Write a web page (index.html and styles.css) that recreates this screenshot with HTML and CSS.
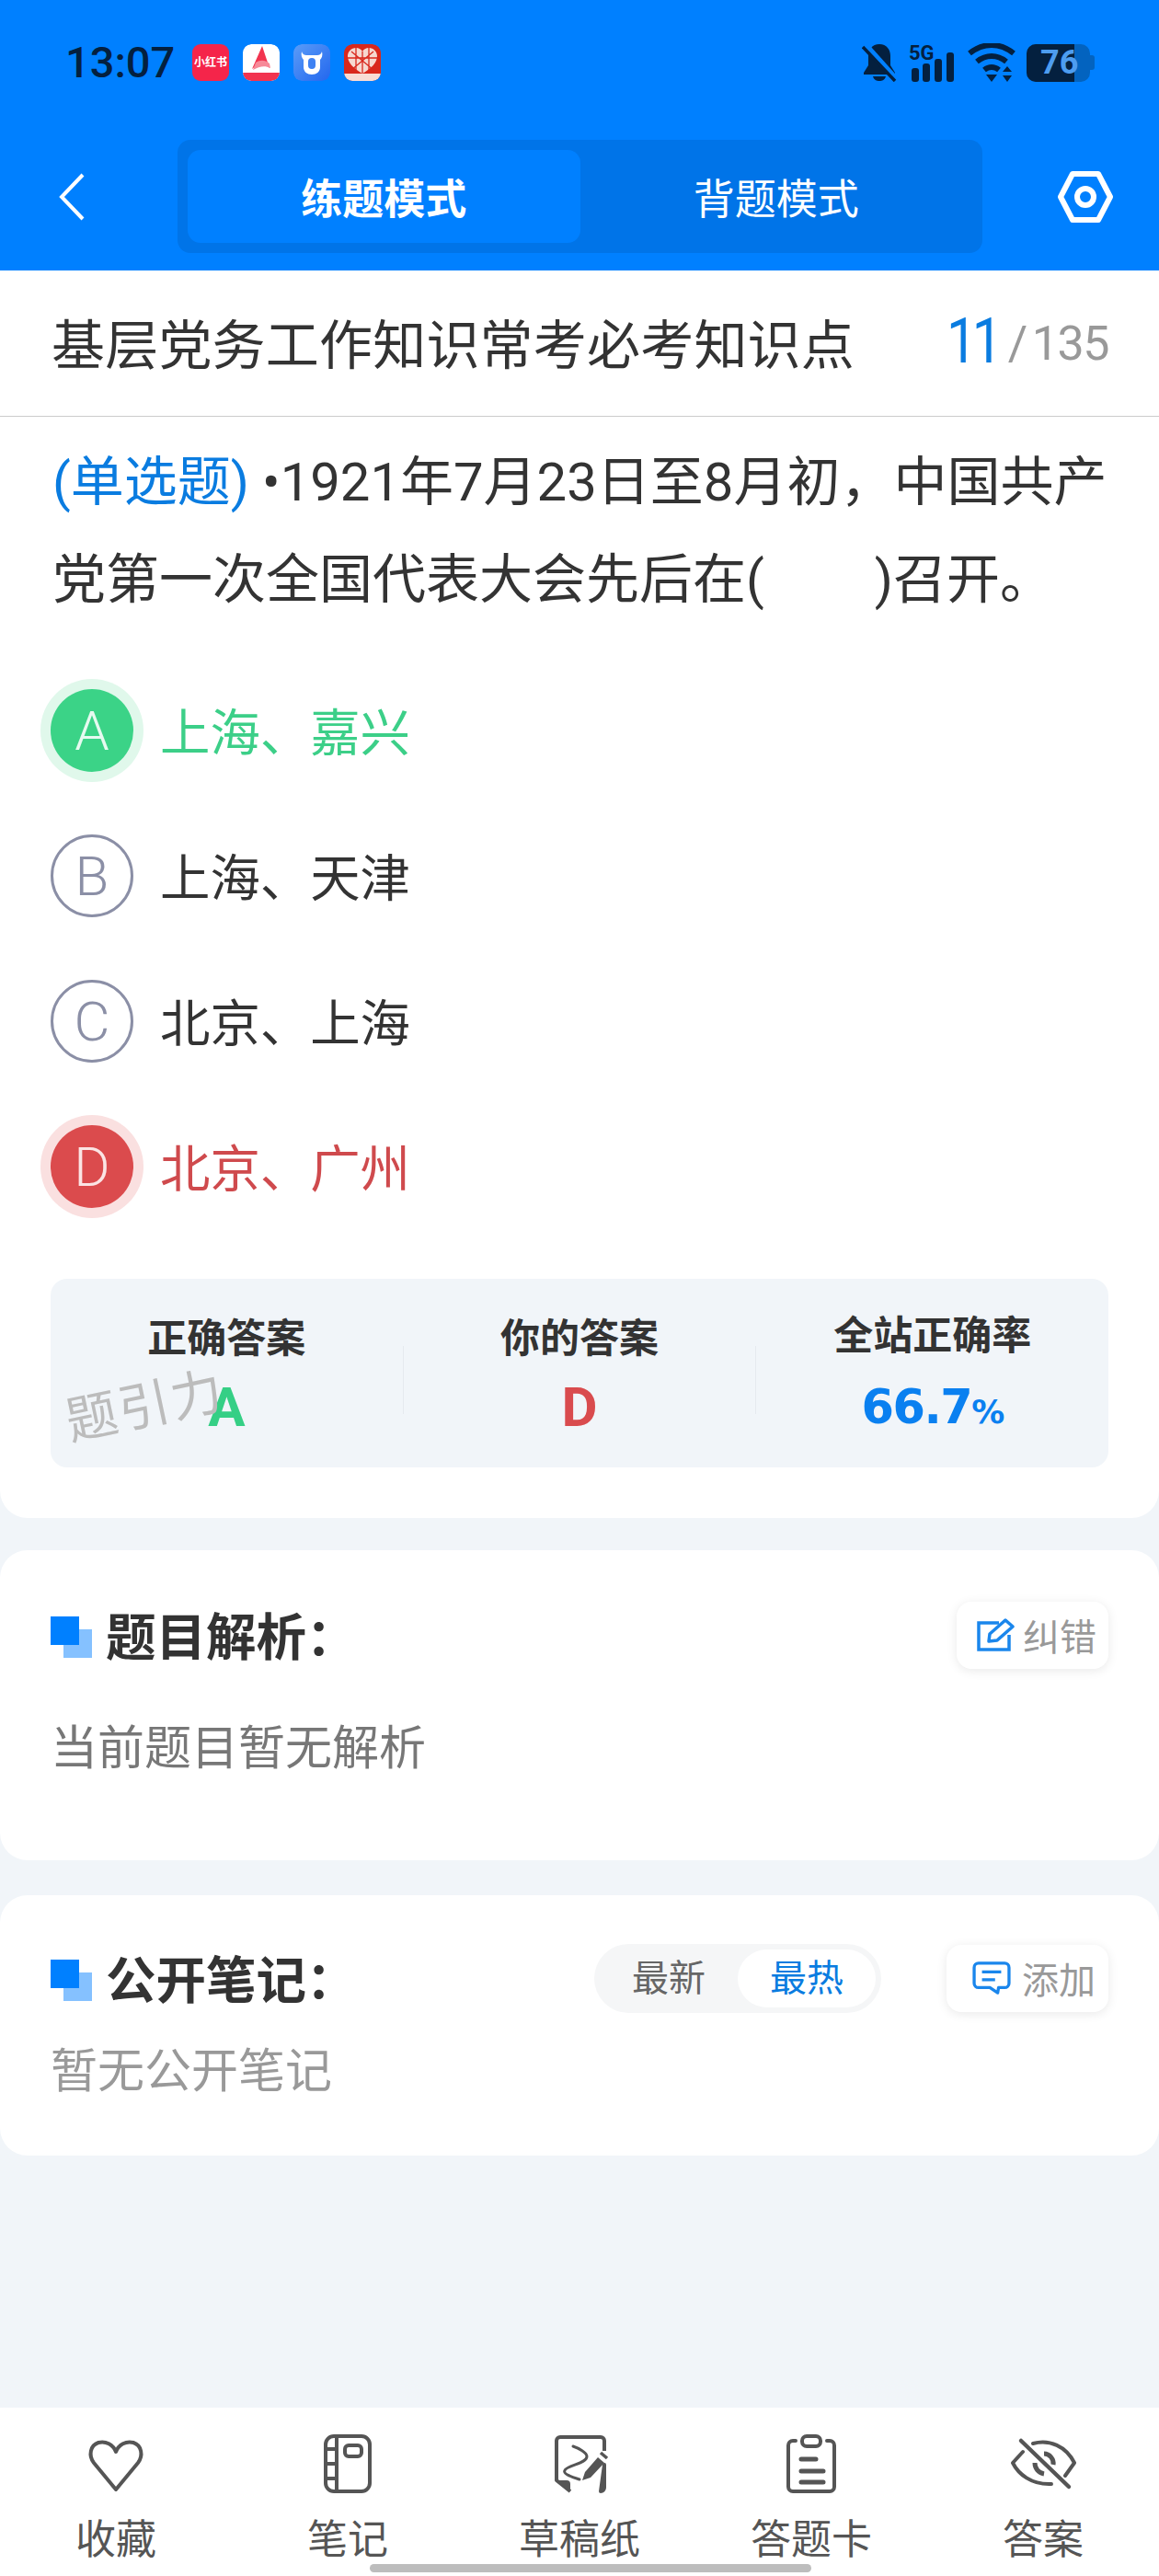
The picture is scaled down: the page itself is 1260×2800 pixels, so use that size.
FILE: index.html
```html
<!DOCTYPE html>
<html lang="zh-CN">
<head>
  <meta charset="UTF-8" />
  <meta name="viewport" content="width=device-width, initial-scale=1.0"/>
  <title>题目详情</title>
  <link rel="stylesheet" href="styles.css">
</head>
<body>

<div class="page">
  <header class="top">
    <div class="status">
      <span class="time">13:07</span>
      <div class="apps">
        <div class="app app-xhs">小红书</div>
        <svg class="app" viewBox="0 0 40 40">
          <rect width="40" height="40" rx="9" fill="#fff"/>
          <path d="M0 31h40a9 9 0 0 1-9 9H9a9 9 0 0 1-9-9z" fill="#f2344f"/>
          <path d="M21 2l8 24-6-5c-4-1-8 2-13 6z" fill="#f2344f"/>
          <path d="M14 20c5-3 10-3 15 1l1 5c-6-3-12-2-19 2z" fill="#f78a98"/>
        </svg>
        <svg class="app" viewBox="0 0 40 40">
          <defs>
            <linearGradient id="cow" x1="0" y1="0" x2="1" y2="1">
              <stop offset="0" stop-color="#5a9cf8"/>
              <stop offset="1" stop-color="#2367ee"/>
            </linearGradient>
          </defs>
          <rect width="40" height="40" rx="9" fill="url(#cow)"/>
          <path d="M9 8c1 3 3 4 5 4h12c2 0 4-1 5-4 1 4 0 7-2 9v8c0 5-4 8-9 8s-9-3-9-8v-8c-2-2-3-5-2-9z" fill="#fff"/>
          <rect x="16" y="15" width="8" height="12" rx="4" fill="#3f82f3"/>
        </svg>
        <svg class="app" viewBox="0 0 40 40">
          <rect width="40" height="40" rx="9" fill="#d9281c"/>
          <path d="M20 32C10 26 4 20 4 13c0-5 4-9 9-9 3 0 5 1 7 4 2-3 4-4 7-4 5 0 9 4 9 9 0 7-6 13-16 19z" fill="#f6d9d0"/>
          <path d="M20 8v24M8 8l24 20M32 8L8 28M4 15h32M13 4v24M27 4v24" stroke="#d9281c" stroke-width="1.3" fill="none"/>
          <path d="M0 32h40a9 9 0 0 1-9 8H9a9 9 0 0 1-9-8z" fill="#f8dcd4"/>
        </svg>
      </div>
      <div class="sys">
        <svg class="ic-bell" viewBox="0 0 38 42">
          <path d="M19 1c8 0 12 6 12 13v10l5 8v2H2v-2l5-8V14C7 7 11 1 19 1z" fill="#04203f"/>
          <path d="M12 36h14c-1 4-4 5-7 5s-6-1-7-5z" fill="#04203f"/>
          <path d="M4 1l34 38" stroke="#0080ff" stroke-width="5"/>
          <path d="M1 4l35 37" stroke="#04203f" stroke-width="3.5"/>
        </svg>
        <svg class="ic-signal" viewBox="0 0 50 42">
          <text x="0" y="18" class="sig-label">5G</text>
          <rect x="3" y="27" width="8" height="15" rx="3" fill="#04203f"/>
          <rect x="15" y="22" width="8" height="20" rx="3" fill="#04203f"/>
          <rect x="28" y="17" width="8" height="25" rx="3" fill="#04203f"/>
          <rect x="41" y="10" width="8" height="32" rx="3" fill="#04203f"/>
        </svg>
        <svg class="ic-wifi" viewBox="0 0 54 42">
          <path d="M3 11c15-12 33-12 48 0M11 20c10-8 22-8 32 0M19 29c5-4 11-4 16 0" fill="none" stroke="#04203f" stroke-width="6"/>
          <path d="M21 34h12l-6 8zM39 31l5-6 5 6zM39 35h10l-5 7z" fill="#04203f"/>
        </svg>
        <div class="battery">
          <div class="battery-body">
            <div class="battery-fill"></div>
            <span class="battery-num">76</span>
          </div>
          <div class="battery-tip"></div>
        </div>
      </div>
    </div>
    <div class="nav">
      <svg class="ic-back" viewBox="0 0 28 52">
        <path d="M26 2L3 26l23 24" fill="none" stroke="#fff" stroke-width="4"/>
      </svg>
      <div class="mode">
        <div class="mode-item active">练题模式</div>
        <div class="mode-item">背题模式</div>
      </div>
      <svg class="ic-set" viewBox="0 0 60 56">
        <path d="M16 3h28l13 25-13 25H16L3 28z" fill="none" stroke="#fff" stroke-width="6" stroke-linejoin="round"/>
        <circle cx="30" cy="28" r="9" fill="none" stroke="#fff" stroke-width="6"/>
      </svg>
    </div>
  </header>

  <main class="main">
    <section class="card card-q">
      <div class="paper">
        <div class="paper-name">基层党务工作知识常考必考知识点</div>
        <div class="paper-count"><span class="count-now">11</span><span class="count-sep">/</span>135</div>
      </div>
      <div class="question"><span class="q-type">(单选题)</span><span class="q-dot">•</span>1921年7月23日至8月初，中国共产党第一次全国代表大会先后在(<span class="q-blank"></span>)召开。</div>
      <div class="options">
        <div class="option right"><span class="letter">A</span><span class="opt-text">上海、嘉兴</span></div>
        <div class="option"><span class="letter">B</span><span class="opt-text">上海、天津</span></div>
        <div class="option"><span class="letter">C</span><span class="opt-text">北京、上海</span></div>
        <div class="option wrong"><span class="letter">D</span><span class="opt-text">北京、广州</span></div>
      </div>
      <div class="stats">
        <div class="stat">
          <div class="stat-label">正确答案</div>
          <div class="stat-value green">A</div>
        </div>
        <div class="stat-line"></div>
        <div class="stat">
          <div class="stat-label">你的答案</div>
          <div class="stat-value red">D</div>
        </div>
        <div class="stat-line"></div>
        <div class="stat">
          <div class="stat-label">全站正确率</div>
          <div class="stat-value blue rate">66.7<small>%</small></div>
        </div>
        <div class="watermark">题引力</div>
      </div>
    </section>

    <section class="card card-parse">
      <div class="sec-head">
        <svg class="sec-icon" viewBox="0 0 45 45">
          <rect x="14" y="14" width="31" height="31" fill="#85c1ff"/>
          <rect x="0" y="0" width="31" height="31" fill="#0080ff"/>
        </svg>
        <h2 class="sec-title">题目解析：</h2>
        <div class="sec-btn">
          <svg class="btn-ic" viewBox="0 0 42 36">
            <path d="M24 5H2v29h33V18" fill="none" stroke="#1a86ec" stroke-width="3.5"/>
            <path d="M13 25l1-8L31 2l8 7-17 15z" fill="none" stroke="#1a86ec" stroke-width="3.5" stroke-linejoin="round"/>
          </svg>
          纠错
        </div>
      </div>
      <p class="sec-text">当前题目暂无解析</p>
    </section>

    <section class="card card-note">
      <div class="sec-head">
        <svg class="sec-icon" viewBox="0 0 45 45">
          <rect x="14" y="14" width="31" height="31" fill="#85c1ff"/>
          <rect x="0" y="0" width="31" height="31" fill="#0080ff"/>
        </svg>
        <h2 class="sec-title">公开笔记：</h2>
        <div class="sort">
          <span class="sort-item">最新</span>
          <span class="sort-item on">最热</span>
        </div>
        <div class="sec-btn add">
          <svg class="btn-ic" viewBox="0 0 44 38">
            <path d="M7 2h30a5 5 0 0 1 5 5v18a5 5 0 0 1-5 5h-7l-1 6-9-6H7a5 5 0 0 1-5-5V7a5 5 0 0 1 5-5z" fill="none" stroke="#1a86ec" stroke-width="3.5" stroke-linejoin="round"/>
            <path d="M11 12h22M11 21h15" stroke="#1a86ec" stroke-width="3.5"/>
          </svg>
          添加
        </div>
      </div>
      <p class="sec-text light">暂无公开笔记</p>
    </section>
  </main>

  <nav class="tabs">
    <div class="tab">
      <svg class="tab-ic" viewBox="0 0 64 64">
        <path d="M32 60L8 31C2 23 4 12 13 9c8-2 16 2 19 10 3-8 11-12 19-10 9 3 11 14 5 22z" fill="none" stroke="#555" stroke-width="4" stroke-linejoin="round"/>
      </svg>
      收藏
    </div>
    <div class="tab">
      <svg class="tab-ic" viewBox="0 0 64 64">
        <rect x="8" y="2" width="48" height="60" rx="9" fill="none" stroke="#555" stroke-width="4"/>
        <path d="M20 2v60M8 16h12M8 32h12M8 48h12" fill="none" stroke="#555" stroke-width="4"/>
        <rect x="29" y="12" width="18" height="12" rx="4" fill="none" stroke="#555" stroke-width="4"/>
      </svg>
      笔记
    </div>
    <div class="tab">
      <svg class="tab-ic" viewBox="0 0 64 64">
        <path d="M22 62L7 50V7a4 4 0 0 1 4-4h44a4 4 0 0 1 4 4v11M59 33v25a4 4 0 0 1-4 4z" fill="none" stroke="#555" stroke-width="4" stroke-linejoin="round"/>
        <path d="M7 50h11a4 4 0 0 1 4 4v8z" fill="#555"/>
        <path d="M25 13c6 2 15 7 15 11 0 6-12 8-20 12-6 3-6 6 1 9 4 2 8 3 11 4" fill="none" stroke="#555" stroke-width="3" stroke-linecap="round"/>
        <path d="M52 25l7 6-15 16-9 3 3-9z" fill="#555"/>
        <path d="M55 20l7 6" stroke="#555" stroke-width="3.5"/>
      </svg>
      草稿纸
    </div>
    <div class="tab">
      <svg class="tab-ic" viewBox="0 0 64 64">
        <path d="M15 7h-3a5 5 0 0 0-5 5v45a5 5 0 0 0 5 5h40a5 5 0 0 0 5-5V12a5 5 0 0 0-5-5h-3" fill="none" stroke="#555" stroke-width="4" stroke-linecap="round"/>
        <rect x="22" y="2" width="20" height="11" rx="5" fill="none" stroke="#555" stroke-width="4"/>
        <path d="M21 27h16M21 40h24M21 52h24" stroke="#555" stroke-width="5" stroke-linecap="round"/>
      </svg>
      答题卡
    </div>
    <div class="tab">
      <svg class="tab-ic" viewBox="0 0 72 64">
        <path d="M14 19L3 31c6 12 20 24 42 23M25 10c18-5 36 3 45 21l-10 14" fill="none" stroke="#555" stroke-width="4" stroke-linecap="round" stroke-linejoin="round"/>
        <path d="M12 7l52 50" stroke="#555" stroke-width="4.5" stroke-linecap="round"/>
        <path d="M37 21c6 0 11 6 10 12M27 31c0 6 4 11 10 12" fill="none" stroke="#555" stroke-width="5"/>
      </svg>
      答案
    </div>
  </nav>

  <div class="home-bar"></div>
</div>

</body>
</html>
```

FILE: styles.css
```css
* { box-sizing: border-box; }
body {
  margin: 0;
  font-family: Roboto, "Noto Sans CJK SC", sans-serif;
  background: #f1f5f9;
  color: #333;
}
.page {
  position: relative;
  width: 1260px;
  height: 2800px;
  display: flex;
  flex-direction: column;
  overflow: hidden;
}

/* top blue area */
.top {
  height: 294px;
  padding-top: 47px;
  background: #0080ff;
}
.status {
  display: flex;
  align-items: center;
  height: 42px;
  padding: 0 70px 0 71px;
}
.time {
  width: 138px;
  font-size: 47px;
  font-weight: 500;
  line-height: 42px;
  color: #04203f;
}
.apps { display: flex; gap: 15px; }
.app { display: block; width: 40px; height: 40px; border-radius: 9px; }
.app-xhs {
  background: #f5254a;
  color: #fff;
  font-size: 12px;
  font-weight: 700;
  line-height: 40px;
  text-align: center;
  white-space: nowrap;
}
.sys { display: flex; align-items: center; margin-left: auto; }
.ic-bell { width: 38px; height: 42px; }
.ic-signal { width: 50px; height: 42px; margin-left: 13px; overflow: visible; }
.sig-label { font-family: Roboto, sans-serif; font-size: 22px; font-weight: 700; fill: #04203f; }
.ic-wifi { width: 54px; height: 42px; margin-left: 13px; }
.battery { display: flex; align-items: center; margin-left: 11px; }
.battery-body {
  position: relative;
  width: 69px;
  height: 41px;
  border-radius: 10px;
  background: #0363bf;
}
.battery-fill { width: 52px; height: 41px; border-radius: 10px 0 0 10px; background: #04203f; }
.battery-tip { width: 5px; height: 16px; border-radius: 0 3px 3px 0; background: #0363bf; }
.battery-num {
  position: absolute;
  left: 15px;
  top: 0;
  font-size: 36px;
  font-weight: 700;
  line-height: 41px;
  color: #4d9df0;
}
.nav {
  display: flex;
  align-items: center;
  margin-top: 63px;
  padding: 0 50px 0 64px;
}
.ic-back { width: 28px; height: 52px; }
.mode {
  display: flex;
  width: 875px;
  height: 123px;
  margin-left: 101px;
  padding: 11px;
  border-radius: 14px;
  background: #0074e8;
}
.mode-item {
  flex: 1;
  display: flex;
  align-items: center;
  justify-content: center;
  border-radius: 14px;
  color: #fff;
  font-size: 45px;
}
.mode-item.active { background: #0080ff; font-weight: 700; }
.ic-set { width: 60px; height: 56px; margin-left: auto; }

/* cards */
.main { flex: 1; }
.card { background: #fff; border-radius: 30px; padding: 0 55px; }
.card-q { height: 1356px; border-radius: 0 0 30px 30px; }
.paper {
  display: flex;
  align-items: center;
  justify-content: space-between;
  height: 159px;
  margin: 0 -55px;
  padding: 0 55px 5px 56px;
  border-bottom: 1px solid #ccc;
}
.paper-name { font-size: 58px; letter-spacing: 0.2px; color: #333; white-space: nowrap; }
.paper-count { font-size: 52px; letter-spacing: -1.5px; color: #999; }
.count-now {
  display: inline-block;
  font-size: 68px;
  letter-spacing: -6px;
  color: #0a7ce0;
  vertical-align: -3px;
  transform: scaleX(0.86);
  transform-origin: right center;
}
.count-sep { margin: 0 6px 0 11px; }
.question {
  margin-top: 18px;
  padding-left: 2px;
  font-size: 58px;
  line-height: 106px;
  color: #333;
}
.q-type { color: #0a7ce0; }
.q-dot { margin-left: 14px; }
.q-blank { display: inline-block; width: 120px; }
.options { margin-top: 32px; }
.option {
  display: flex;
  align-items: center;
  height: 158px;
  font-size: 54.4px;
  color: #333;
}
.opt-text { margin-top: -3px; }
.letter {
  display: flex;
  align-items: center;
  justify-content: center;
  width: 90px;
  height: 90px;
  margin-right: 29px;
  border: 3px solid #8b8fa6;
  border-radius: 50%;
  color: #8b8fa6;
  font-size: 60px;
  font-weight: 300;
}
.option.right { color: #3ccf88; }
.option.right .letter {
  border: 0;
  background: #3bd387;
  color: #e6faf0;
  box-shadow: 0 0 0 11px #e0f8eb;
}
.option.wrong { color: #cf4a4d; }
.option.wrong .letter {
  border: 0;
  background: #db4b4d;
  color: #fbe4e4;
  box-shadow: 0 0 0 11px #fae0e0;
}

.stats {
  position: relative;
  display: grid;
  grid-template-columns: 1fr 1px 1fr 1px 1fr;
  align-items: center;
  height: 205px;
  margin-top: 43px;
  border-radius: 18px;
  background: #f1f5f9;
}
.stat { text-align: center; }
.stat-label { font-size: 43px; font-weight: 700; line-height: 60px; color: #333; }
.stat-value { margin-top: 14px; font-size: 60px; font-weight: 700; line-height: 62px; }
.stat-line { height: 74px; margin-top: 14px; background: #e6eaef; }
.green { color: #35cf85; }
.red { color: #d94b4e; }
.blue { color: #0a80f0; }
.rate {
  font-family: "DejaVu Sans", sans-serif;
  font-size: 51px;
  letter-spacing: -1.5px;
  transform: translateY(3px);
}
.rate small { font-size: 36px; }
.watermark {
  position: absolute;
  left: 8px;
  top: 112px;
  font-size: 56px;
  letter-spacing: 2px;
  color: #bcbcbc;
  transform: rotate(-12deg);
  transform-origin: left top;
}

.card-parse { height: 337px; margin-top: 35px; padding-top: 55px; }
.card-note { height: 283px; margin-top: 38px; padding-top: 53px; }
.sec-head { display: flex; align-items: center; height: 74px; }
.sec-icon { width: 45px; height: 45px; flex: none; margin-top: 4px; }
.sec-title {
  margin: 0 0 4px 15px;
  font-size: 54.5px;
  font-weight: 700;
  color: #333;
}
.sec-btn {
  display: flex;
  align-items: center;
  width: 165px;
  height: 73px;
  margin-left: auto;
  padding-left: 22px;
  gap: 8px;
  border-radius: 16px;
  background: #fff;
  box-shadow: 0 2px 12px rgba(0, 0, 0, 0.09);
  font-size: 40px;
  color: #999;
}
.sec-btn.add { width: 176px; margin-left: 71px; padding-left: 28px; gap: 12px; }
.btn-ic { width: 42px; height: 36px; flex: none; }
.sort {
  display: flex;
  align-items: center;
  width: 312px;
  height: 75px;
  margin-left: auto;
  padding: 6px;
  border-radius: 38px;
  background: #f5f6f7;
}
.sort-item {
  flex: 1;
  height: 63px;
  border-radius: 32px;
  font-size: 40px;
  line-height: 63px;
  text-align: center;
  color: #666;
}
.sort-item.on { background: #fff; color: #0a7ce0; }
.sec-text { margin: 52px 0 0 0; font-size: 51px; line-height: 70px; color: #777; }
.sec-text.light { margin-top: 30px; color: #999; }

/* bottom bar */
.tabs {
  display: grid;
  grid-template-columns: repeat(5, 1fr);
  height: 183px;
  padding-top: 29px;
  background: #fff;
}
.tab {
  display: flex;
  flex-direction: column;
  align-items: center;
  font-size: 44px;
  line-height: 60px;
  color: #555;
}
.tab-ic { width: 64px; height: 64px; margin-bottom: 21px; }
.tab:last-child .tab-ic { width: 72px; }
.home-bar {
  position: absolute;
  left: 402px;
  top: 2787px;
  width: 480px;
  height: 9px;
  border-radius: 5px;
  background: #bdbdbd;
}
```
